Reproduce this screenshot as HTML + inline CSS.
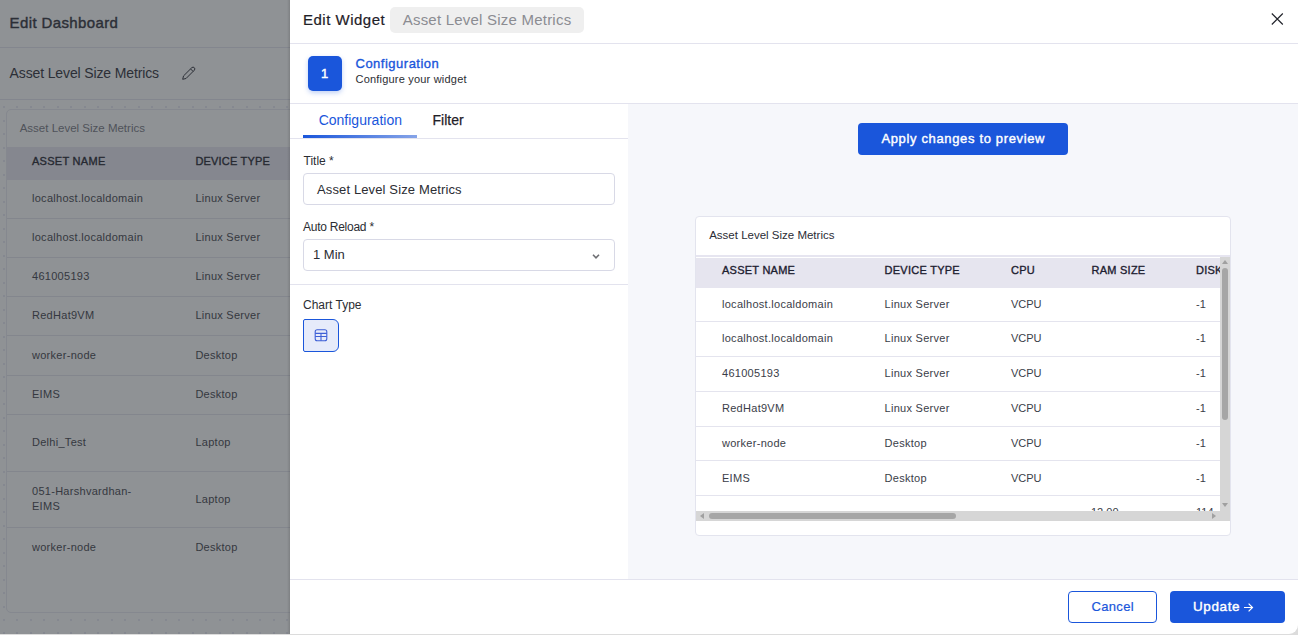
<!DOCTYPE html>
<html><head><meta charset="utf-8">
<style>
*{box-sizing:border-box;margin:0;padding:0}
html,body{width:1298px;height:635px;overflow:hidden;background:#dcdcdc;font-family:"Liberation Sans",sans-serif}
.t{position:absolute;white-space:nowrap;line-height:normal}
.b{position:absolute}
#bg{position:absolute;left:0;top:0;width:290px;height:634px;background:#8f9295;overflow:hidden}
#dr{position:absolute;left:290px;top:0;width:1008px;height:634px;background:#fff;border-bottom-right-radius:9px;overflow:hidden}
#sh{position:absolute;left:287px;top:0;width:3px;height:634px;background:linear-gradient(90deg,rgba(0,0,0,0),rgba(0,0,0,.12))}
</style></head>
<body>
<div id="bg">
<div class="t" style="left:9.6px;top:14.42px;font-size:15px;color:#2c2f37;letter-spacing:0.38px;-webkit-text-stroke:0.4px #2c2f37;">Edit Dashboard</div>
<div class="b" style="left:0;top:47px;width:290px;height:1px;background:#83868e"></div>
<div class="t" style="left:9.6px;top:65.33px;font-size:14px;color:#2c2f37;letter-spacing:-0.13px;">Asset Level Size Metrics</div>
<svg class="b" style="left:175px;top:60px" width="30" height="25" viewBox="0 0 30 25"><path d="M7.7 19.3 L8.53 15.93 L16.83 7.63 A1.8 1.8 0 0 1 19.37 10.17 L11.07 18.47 Z M15.56 8.9 L18.1 11.44" fill="none" stroke="#2c2f37" stroke-width="1" stroke-linejoin="round"/></svg>
<div class="b" style="left:0;top:99px;width:290px;height:1px;background:#83868e"></div>
<div class="b" style="left:2.5px;top:106px;width:2px;height:2px;background:#858890"></div>
<div class="b" style="left:2.5px;top:619px;width:2px;height:2px;background:#858890"></div>
<div class="b" style="left:2.5px;top:632px;width:2px;height:2px;background:#858890"></div>
<div class="b" style="left:16.0px;top:106px;width:2px;height:2px;background:#858890"></div>
<div class="b" style="left:16.0px;top:619px;width:2px;height:2px;background:#858890"></div>
<div class="b" style="left:16.0px;top:632px;width:2px;height:2px;background:#858890"></div>
<div class="b" style="left:29.5px;top:106px;width:2px;height:2px;background:#858890"></div>
<div class="b" style="left:29.5px;top:619px;width:2px;height:2px;background:#858890"></div>
<div class="b" style="left:29.5px;top:632px;width:2px;height:2px;background:#858890"></div>
<div class="b" style="left:43.0px;top:106px;width:2px;height:2px;background:#858890"></div>
<div class="b" style="left:43.0px;top:619px;width:2px;height:2px;background:#858890"></div>
<div class="b" style="left:43.0px;top:632px;width:2px;height:2px;background:#858890"></div>
<div class="b" style="left:56.5px;top:106px;width:2px;height:2px;background:#858890"></div>
<div class="b" style="left:56.5px;top:619px;width:2px;height:2px;background:#858890"></div>
<div class="b" style="left:56.5px;top:632px;width:2px;height:2px;background:#858890"></div>
<div class="b" style="left:70.0px;top:106px;width:2px;height:2px;background:#858890"></div>
<div class="b" style="left:70.0px;top:619px;width:2px;height:2px;background:#858890"></div>
<div class="b" style="left:70.0px;top:632px;width:2px;height:2px;background:#858890"></div>
<div class="b" style="left:83.5px;top:106px;width:2px;height:2px;background:#858890"></div>
<div class="b" style="left:83.5px;top:619px;width:2px;height:2px;background:#858890"></div>
<div class="b" style="left:83.5px;top:632px;width:2px;height:2px;background:#858890"></div>
<div class="b" style="left:97.0px;top:106px;width:2px;height:2px;background:#858890"></div>
<div class="b" style="left:97.0px;top:619px;width:2px;height:2px;background:#858890"></div>
<div class="b" style="left:97.0px;top:632px;width:2px;height:2px;background:#858890"></div>
<div class="b" style="left:110.5px;top:106px;width:2px;height:2px;background:#858890"></div>
<div class="b" style="left:110.5px;top:619px;width:2px;height:2px;background:#858890"></div>
<div class="b" style="left:110.5px;top:632px;width:2px;height:2px;background:#858890"></div>
<div class="b" style="left:124.0px;top:106px;width:2px;height:2px;background:#858890"></div>
<div class="b" style="left:124.0px;top:619px;width:2px;height:2px;background:#858890"></div>
<div class="b" style="left:124.0px;top:632px;width:2px;height:2px;background:#858890"></div>
<div class="b" style="left:137.5px;top:106px;width:2px;height:2px;background:#858890"></div>
<div class="b" style="left:137.5px;top:619px;width:2px;height:2px;background:#858890"></div>
<div class="b" style="left:137.5px;top:632px;width:2px;height:2px;background:#858890"></div>
<div class="b" style="left:151.0px;top:106px;width:2px;height:2px;background:#858890"></div>
<div class="b" style="left:151.0px;top:619px;width:2px;height:2px;background:#858890"></div>
<div class="b" style="left:151.0px;top:632px;width:2px;height:2px;background:#858890"></div>
<div class="b" style="left:164.5px;top:106px;width:2px;height:2px;background:#858890"></div>
<div class="b" style="left:164.5px;top:619px;width:2px;height:2px;background:#858890"></div>
<div class="b" style="left:164.5px;top:632px;width:2px;height:2px;background:#858890"></div>
<div class="b" style="left:178.0px;top:106px;width:2px;height:2px;background:#858890"></div>
<div class="b" style="left:178.0px;top:619px;width:2px;height:2px;background:#858890"></div>
<div class="b" style="left:178.0px;top:632px;width:2px;height:2px;background:#858890"></div>
<div class="b" style="left:191.5px;top:106px;width:2px;height:2px;background:#858890"></div>
<div class="b" style="left:191.5px;top:619px;width:2px;height:2px;background:#858890"></div>
<div class="b" style="left:191.5px;top:632px;width:2px;height:2px;background:#858890"></div>
<div class="b" style="left:205.0px;top:106px;width:2px;height:2px;background:#858890"></div>
<div class="b" style="left:205.0px;top:619px;width:2px;height:2px;background:#858890"></div>
<div class="b" style="left:205.0px;top:632px;width:2px;height:2px;background:#858890"></div>
<div class="b" style="left:218.5px;top:106px;width:2px;height:2px;background:#858890"></div>
<div class="b" style="left:218.5px;top:619px;width:2px;height:2px;background:#858890"></div>
<div class="b" style="left:218.5px;top:632px;width:2px;height:2px;background:#858890"></div>
<div class="b" style="left:232.0px;top:106px;width:2px;height:2px;background:#858890"></div>
<div class="b" style="left:232.0px;top:619px;width:2px;height:2px;background:#858890"></div>
<div class="b" style="left:232.0px;top:632px;width:2px;height:2px;background:#858890"></div>
<div class="b" style="left:245.5px;top:106px;width:2px;height:2px;background:#858890"></div>
<div class="b" style="left:245.5px;top:619px;width:2px;height:2px;background:#858890"></div>
<div class="b" style="left:245.5px;top:632px;width:2px;height:2px;background:#858890"></div>
<div class="b" style="left:259.0px;top:106px;width:2px;height:2px;background:#858890"></div>
<div class="b" style="left:259.0px;top:619px;width:2px;height:2px;background:#858890"></div>
<div class="b" style="left:259.0px;top:632px;width:2px;height:2px;background:#858890"></div>
<div class="b" style="left:272.5px;top:106px;width:2px;height:2px;background:#858890"></div>
<div class="b" style="left:272.5px;top:619px;width:2px;height:2px;background:#858890"></div>
<div class="b" style="left:272.5px;top:632px;width:2px;height:2px;background:#858890"></div>
<div class="b" style="left:286.0px;top:106px;width:2px;height:2px;background:#858890"></div>
<div class="b" style="left:286.0px;top:619px;width:2px;height:2px;background:#858890"></div>
<div class="b" style="left:286.0px;top:632px;width:2px;height:2px;background:#858890"></div>
<div class="b" style="left:2.5px;top:119.5px;width:2px;height:2px;background:#858890"></div>
<div class="b" style="left:2.5px;top:133.0px;width:2px;height:2px;background:#858890"></div>
<div class="b" style="left:2.5px;top:146.5px;width:2px;height:2px;background:#858890"></div>
<div class="b" style="left:2.5px;top:160.0px;width:2px;height:2px;background:#858890"></div>
<div class="b" style="left:2.5px;top:173.5px;width:2px;height:2px;background:#858890"></div>
<div class="b" style="left:2.5px;top:187.0px;width:2px;height:2px;background:#858890"></div>
<div class="b" style="left:2.5px;top:200.5px;width:2px;height:2px;background:#858890"></div>
<div class="b" style="left:2.5px;top:214.0px;width:2px;height:2px;background:#858890"></div>
<div class="b" style="left:2.5px;top:227.5px;width:2px;height:2px;background:#858890"></div>
<div class="b" style="left:2.5px;top:241.0px;width:2px;height:2px;background:#858890"></div>
<div class="b" style="left:2.5px;top:254.5px;width:2px;height:2px;background:#858890"></div>
<div class="b" style="left:2.5px;top:268.0px;width:2px;height:2px;background:#858890"></div>
<div class="b" style="left:2.5px;top:281.5px;width:2px;height:2px;background:#858890"></div>
<div class="b" style="left:2.5px;top:295.0px;width:2px;height:2px;background:#858890"></div>
<div class="b" style="left:2.5px;top:308.5px;width:2px;height:2px;background:#858890"></div>
<div class="b" style="left:2.5px;top:322.0px;width:2px;height:2px;background:#858890"></div>
<div class="b" style="left:2.5px;top:335.5px;width:2px;height:2px;background:#858890"></div>
<div class="b" style="left:2.5px;top:349.0px;width:2px;height:2px;background:#858890"></div>
<div class="b" style="left:2.5px;top:362.5px;width:2px;height:2px;background:#858890"></div>
<div class="b" style="left:2.5px;top:376.0px;width:2px;height:2px;background:#858890"></div>
<div class="b" style="left:2.5px;top:389.5px;width:2px;height:2px;background:#858890"></div>
<div class="b" style="left:2.5px;top:403.0px;width:2px;height:2px;background:#858890"></div>
<div class="b" style="left:2.5px;top:416.5px;width:2px;height:2px;background:#858890"></div>
<div class="b" style="left:2.5px;top:430.0px;width:2px;height:2px;background:#858890"></div>
<div class="b" style="left:2.5px;top:443.5px;width:2px;height:2px;background:#858890"></div>
<div class="b" style="left:2.5px;top:457.0px;width:2px;height:2px;background:#858890"></div>
<div class="b" style="left:2.5px;top:470.5px;width:2px;height:2px;background:#858890"></div>
<div class="b" style="left:2.5px;top:484.0px;width:2px;height:2px;background:#858890"></div>
<div class="b" style="left:2.5px;top:497.5px;width:2px;height:2px;background:#858890"></div>
<div class="b" style="left:2.5px;top:511.0px;width:2px;height:2px;background:#858890"></div>
<div class="b" style="left:2.5px;top:524.5px;width:2px;height:2px;background:#858890"></div>
<div class="b" style="left:2.5px;top:538.0px;width:2px;height:2px;background:#858890"></div>
<div class="b" style="left:2.5px;top:551.5px;width:2px;height:2px;background:#858890"></div>
<div class="b" style="left:2.5px;top:565.0px;width:2px;height:2px;background:#858890"></div>
<div class="b" style="left:2.5px;top:578.5px;width:2px;height:2px;background:#858890"></div>
<div class="b" style="left:2.5px;top:592.0px;width:2px;height:2px;background:#858890"></div>
<div class="b" style="left:2.5px;top:605.5px;width:2px;height:2px;background:#858890"></div>
<div class="b" style="left:5.5px;top:109px;width:300px;height:503.5px;border:1px solid #85888f;border-radius:5px;background:#8f9295"></div>
<div class="t" style="left:19.7px;top:121.59px;font-size:11.5px;color:#50535a;">Asset Level Size Metrics</div>
<div class="b" style="left:6.5px;top:147px;width:290px;height:33px;background:#85878f"></div>
<div class="t" style="left:32px;top:154.84px;font-size:11px;color:#262931;letter-spacing:0.28px;-webkit-text-stroke:0.35px #262931;">ASSET NAME</div>
<div class="t" style="left:195.4px;top:154.84px;font-size:11px;color:#262931;letter-spacing:0.2px;-webkit-text-stroke:0.35px #262931;">DEVICE TYPE</div>
<div class="b" style="left:6.5px;top:217.7px;width:290px;height:1px;background:#83868d"></div>
<div class="b" style="left:6.5px;top:257.0px;width:290px;height:1px;background:#83868d"></div>
<div class="b" style="left:6.5px;top:295.8px;width:290px;height:1px;background:#83868d"></div>
<div class="b" style="left:6.5px;top:335.1px;width:290px;height:1px;background:#83868d"></div>
<div class="b" style="left:6.5px;top:374.5px;width:290px;height:1px;background:#83868d"></div>
<div class="b" style="left:6.5px;top:413.8px;width:290px;height:1px;background:#83868d"></div>
<div class="b" style="left:6.5px;top:470.8px;width:290px;height:1px;background:#83868d"></div>
<div class="b" style="left:6.5px;top:527.1px;width:290px;height:1px;background:#83868d"></div>
<div class="t" style="left:32px;top:191.84px;font-size:11px;color:#353840;letter-spacing:0.28px;">localhost.localdomain</div>
<div class="t" style="left:195.4px;top:191.84px;font-size:11px;color:#353840;letter-spacing:0.27px;">Linux Server</div>
<div class="t" style="left:32px;top:231.04px;font-size:11px;color:#353840;letter-spacing:0.28px;">localhost.localdomain</div>
<div class="t" style="left:195.4px;top:231.04px;font-size:11px;color:#353840;letter-spacing:0.27px;">Linux Server</div>
<div class="t" style="left:32px;top:270.05px;font-size:11px;color:#353840;letter-spacing:0.28px;">461005193</div>
<div class="t" style="left:195.4px;top:270.05px;font-size:11px;color:#353840;letter-spacing:0.27px;">Linux Server</div>
<div class="t" style="left:32px;top:309.05px;font-size:11px;color:#353840;letter-spacing:0.28px;">RedHat9VM</div>
<div class="t" style="left:195.4px;top:309.05px;font-size:11px;color:#353840;letter-spacing:0.27px;">Linux Server</div>
<div class="t" style="left:32px;top:348.94px;font-size:11px;color:#353840;letter-spacing:0.28px;">worker-node</div>
<div class="t" style="left:195.4px;top:348.94px;font-size:11px;color:#353840;letter-spacing:0.27px;">Desktop</div>
<div class="t" style="left:32px;top:388.05px;font-size:11px;color:#353840;letter-spacing:0.28px;">EIMS</div>
<div class="t" style="left:195.4px;top:388.05px;font-size:11px;color:#353840;letter-spacing:0.27px;">Desktop</div>
<div class="t" style="left:32px;top:436.15px;font-size:11px;color:#353840;letter-spacing:0.28px;">Delhi_Test</div>
<div class="t" style="left:195.4px;top:436.15px;font-size:11px;color:#353840;letter-spacing:0.27px;">Laptop</div>
<div class="t" style="left:32px;top:485.05px;font-size:11px;color:#353840;letter-spacing:0.28px;">051-Harshvardhan-</div>
<div class="t" style="left:195.4px;top:492.85px;font-size:11px;color:#353840;letter-spacing:0.27px;">Laptop</div>
<div class="t" style="left:32px;top:541.04px;font-size:11px;color:#353840;letter-spacing:0.28px;">worker-node</div>
<div class="t" style="left:195.4px;top:541.04px;font-size:11px;color:#353840;letter-spacing:0.27px;">Desktop</div>
<div class="t" style="left:32px;top:500.05px;font-size:11px;color:#353840;letter-spacing:0.28px;">EIMS</div>
</div>
<div id="sh"></div>
<div id="dr">
<div class="t" style="left:13px;top:11.42px;font-size:15px;color:#1f2128;letter-spacing:0.5px;-webkit-text-stroke:0.2px #1f2128;">Edit Widget</div>
<div class="b" style="left:100px;top:7px;width:194px;height:26px;background:#efefef;border-radius:5px"></div>
<div class="t" style="left:112.7px;top:11.22px;font-size:15px;color:#8b8c92;letter-spacing:0.22px;">Asset Level Size Metrics</div>
<svg class="b" style="left:980px;top:12px" width="14" height="14" viewBox="0 0 14 14"><path d="M1.8 1.5L12.8 12.5M12.8 1.5L1.8 12.5" stroke="#23252c" stroke-width="1.15"/></svg>
<div class="b" style="left:0;top:43px;width:1008px;height:1px;background:#e3e3ee"></div>
<div class="b" style="left:18px;top:56px;width:34px;height:35px;background:#1a56db;border-radius:5px;box-shadow:0 2px 5px rgba(26,86,219,.28)"></div>
<div class="t" style="left:31px;top:66.23px;font-size:13px;color:#fff;-webkit-text-stroke:0.4px #fff;">1</div>
<div class="t" style="left:65.5px;top:56.23px;font-size:13px;color:#1a56db;letter-spacing:0.5px;-webkit-text-stroke:0.35px #1a56db;">Configuration</div>
<div class="t" style="left:65.5px;top:72.55px;font-size:11px;color:#2b2d33;letter-spacing:0.2px;">Configure your widget</div>
<div class="b" style="left:0;top:103px;width:1008px;height:1px;background:#e3e3ee"></div>
<div class="b" style="left:338px;top:104px;width:670px;height:475px;background:#f6f7fb"></div>
<div class="t" style="left:28.7px;top:112.33px;font-size:14px;color:#1a56db;">Configuration</div>
<div class="t" style="left:142.4px;top:112.33px;font-size:14px;color:#1f2128;letter-spacing:0.05px;-webkit-text-stroke:0.25px #1f2128;">Filter</div>
<div class="b" style="left:13px;top:135px;width:114px;height:3px;background:linear-gradient(90deg,#1a56db,#86a4e8)"></div>
<div class="b" style="left:0;top:138px;width:338px;height:1px;background:#e3e3ee"></div>
<div class="t" style="left:13.5px;top:154.14px;font-size:12px;color:#2b2d33;">Title *</div>
<div class="b" style="left:13px;top:173px;width:312px;height:32px;border:1px solid #d8d9e6;border-radius:4px"></div>
<div class="t" style="left:27px;top:182.44px;font-size:13px;color:#2b2d33;letter-spacing:0.13px;">Asset Level Size Metrics</div>
<div class="t" style="left:13px;top:220.14px;font-size:12px;color:#2b2d33;letter-spacing:-0.25px;">Auto Reload *</div>
<div class="b" style="left:13px;top:239px;width:312px;height:32px;border:1px solid #d8d9e6;border-radius:4px"></div>
<div class="t" style="left:23px;top:247.04px;font-size:13px;color:#2b2d33;">1 Min</div>
<svg class="b" style="left:301.5px;top:253px" width="8" height="7" viewBox="0 0 8 7"><path d="M1 1.8 L4 4.8 L7 1.8" fill="none" stroke="#6e6f73" stroke-width="1.6"/></svg>
<div class="b" style="left:0;top:283.5px;width:338px;height:1px;background:#e3e3ee"></div>
<div class="t" style="left:13px;top:298.14px;font-size:12px;color:#2b2d33;">Chart Type</div>
<div class="b" style="left:13px;top:319px;width:36px;height:33px;border:1.5px solid #1a56db;border-radius:2px 6px 6px 2px;background:#e6ebfa"></div>
<svg class="b" style="left:24px;top:329px" width="14" height="13" viewBox="0 0 14 13"><rect x="1.2" y="0.8" width="11.6" height="11" rx="2" fill="none" stroke="#3d5fd6" stroke-width="1.1"/><path d="M1.2 4.4H12.8M1.2 7.5H12.8M7 4.4V11.8" stroke="#3d5fd6" stroke-width="1.1"/></svg>
<div class="b" style="left:568px;top:123px;width:210px;height:32px;background:#1a56db;border-radius:4px"></div>
<div class="t" style="left:591.4px;top:131.24px;font-size:13px;color:#fff;letter-spacing:0.65px;-webkit-text-stroke:0.4px #fff;">Apply changes to preview</div>
<div class="b" style="left:405px;top:216px;width:535.5px;height:319.5px;background:#fff;border:1px solid #e3e4ee;border-radius:4px"></div>
<div class="t" style="left:419.2px;top:228.89px;font-size:11.5px;color:#2b2d36;">Asset Level Size Metrics</div>
<div class="b" style="left:406px;top:255px;width:534px;height:2px;background:#e6e5f0"></div>
<div class="b" style="left:406px;top:257.5px;width:524px;height:253.5px;overflow:hidden">
<div class="b" style="left:0;top:0.5px;width:600px;height:30px;background:#e6e5ef"></div>
<div class="t" style="left:26.00px;top:6.54px;font-size:11px;color:#1d2030;letter-spacing:0.25px;-webkit-text-stroke:0.35px #1d2030;">ASSET NAME</div>
<div class="t" style="left:188.60px;top:6.54px;font-size:11px;color:#1d2030;letter-spacing:0.25px;-webkit-text-stroke:0.35px #1d2030;">DEVICE TYPE</div>
<div class="t" style="left:315.00px;top:6.54px;font-size:11px;color:#1d2030;letter-spacing:0.25px;-webkit-text-stroke:0.35px #1d2030;">CPU</div>
<div class="t" style="left:395.50px;top:6.54px;font-size:11px;color:#1d2030;letter-spacing:0.25px;-webkit-text-stroke:0.35px #1d2030;">RAM SIZE</div>
<div class="t" style="left:500.00px;top:6.54px;font-size:11px;color:#1d2030;letter-spacing:0.25px;-webkit-text-stroke:0.35px #1d2030;">DISK SPACE</div>
<div class="b" style="left:0;top:63.30px;width:600px;height:1px;background:#e4e4ee"></div>
<div class="b" style="left:0;top:98.60px;width:600px;height:1px;background:#e4e4ee"></div>
<div class="b" style="left:0;top:133.60px;width:600px;height:1px;background:#e4e4ee"></div>
<div class="b" style="left:0;top:168.60px;width:600px;height:1px;background:#e4e4ee"></div>
<div class="b" style="left:0;top:202.80px;width:600px;height:1px;background:#e4e4ee"></div>
<div class="b" style="left:0;top:237.50px;width:600px;height:1px;background:#e4e4ee"></div>
<div class="t" style="left:26.00px;top:40.35px;font-size:11px;color:#3a3d48;letter-spacing:0.28px;">localhost.localdomain</div>
<div class="t" style="left:188.60px;top:40.35px;font-size:11px;color:#3a3d48;letter-spacing:0.27px;">Linux Server</div>
<div class="t" style="left:315.00px;top:40.35px;font-size:11px;color:#3a3d48;">VCPU</div>
<div class="t" style="left:500.00px;top:40.35px;font-size:11px;color:#3a3d48;">-1</div>
<div class="t" style="left:26.00px;top:74.45px;font-size:11px;color:#3a3d48;letter-spacing:0.28px;">localhost.localdomain</div>
<div class="t" style="left:188.60px;top:74.45px;font-size:11px;color:#3a3d48;letter-spacing:0.27px;">Linux Server</div>
<div class="t" style="left:315.00px;top:74.45px;font-size:11px;color:#3a3d48;">VCPU</div>
<div class="t" style="left:500.00px;top:74.45px;font-size:11px;color:#3a3d48;">-1</div>
<div class="t" style="left:26.00px;top:109.75px;font-size:11px;color:#3a3d48;letter-spacing:0.28px;">461005193</div>
<div class="t" style="left:188.60px;top:109.75px;font-size:11px;color:#3a3d48;letter-spacing:0.27px;">Linux Server</div>
<div class="t" style="left:315.00px;top:109.75px;font-size:11px;color:#3a3d48;">VCPU</div>
<div class="t" style="left:500.00px;top:109.75px;font-size:11px;color:#3a3d48;">-1</div>
<div class="t" style="left:26.00px;top:144.75px;font-size:11px;color:#3a3d48;letter-spacing:0.28px;">RedHat9VM</div>
<div class="t" style="left:188.60px;top:144.75px;font-size:11px;color:#3a3d48;letter-spacing:0.27px;">Linux Server</div>
<div class="t" style="left:315.00px;top:144.75px;font-size:11px;color:#3a3d48;">VCPU</div>
<div class="t" style="left:500.00px;top:144.75px;font-size:11px;color:#3a3d48;">-1</div>
<div class="t" style="left:26.00px;top:179.75px;font-size:11px;color:#3a3d48;letter-spacing:0.28px;">worker-node</div>
<div class="t" style="left:188.60px;top:179.75px;font-size:11px;color:#3a3d48;letter-spacing:0.27px;">Desktop</div>
<div class="t" style="left:315.00px;top:179.75px;font-size:11px;color:#3a3d48;">VCPU</div>
<div class="t" style="left:500.00px;top:179.75px;font-size:11px;color:#3a3d48;">-1</div>
<div class="t" style="left:26.00px;top:214.45px;font-size:11px;color:#3a3d48;letter-spacing:0.28px;">EIMS</div>
<div class="t" style="left:188.60px;top:214.45px;font-size:11px;color:#3a3d48;letter-spacing:0.27px;">Desktop</div>
<div class="t" style="left:315.00px;top:214.45px;font-size:11px;color:#3a3d48;">VCPU</div>
<div class="t" style="left:500.00px;top:214.45px;font-size:11px;color:#3a3d48;">-1</div>
<div class="t" style="left:395.00px;top:248.54px;font-size:11px;color:#3a3d48;">12.00</div>
<div class="t" style="left:500.00px;top:248.54px;font-size:11px;color:#3a3d48;">114</div>
</div>
<div class="b" style="left:930px;top:256.5px;width:10px;height:264.5px;background:#d6d6d6"></div>
<div class="b" style="left:406px;top:511px;width:534px;height:10px;background:#d6d6d6"></div>
<div class="b" style="left:932px;top:268px;width:6px;height:152px;background:#a6a6a6;border-radius:3px"></div>
<div class="b" style="left:418.5px;top:513px;width:247px;height:6px;background:#a6a6a6;border-radius:3px"></div>
<svg class="b" style="left:931px;top:259px" width="8" height="6" viewBox="0 0 8 6"><path d="M4 1L7 5H1Z" fill="#a0a0a0"/></svg>
<svg class="b" style="left:931px;top:502px" width="8" height="6" viewBox="0 0 8 6"><path d="M1 1H7L4 5Z" fill="#a0a0a0"/></svg>
<svg class="b" style="left:409px;top:512px" width="6" height="8" viewBox="0 0 6 8"><path d="M5 1V7L1 4Z" fill="#a0a0a0"/></svg>
<svg class="b" style="left:921px;top:512px" width="6" height="8" viewBox="0 0 6 8"><path d="M1 1V7L5 4Z" fill="#a0a0a0"/></svg>
<div class="b" style="left:0;top:579px;width:1008px;height:1px;background:#e3e3ee"></div>
<div class="b" style="left:778px;top:591px;width:89px;height:32px;border:1px solid #1a56db;border-radius:4px"></div>
<div class="t" style="left:801.6px;top:599.44px;font-size:13px;color:#1a56db;letter-spacing:0.3px;-webkit-text-stroke:0.2px #1a56db;">Cancel</div>
<div class="b" style="left:880px;top:591px;width:115px;height:32px;background:#1a56db;border-radius:4px"></div>
<div class="t" style="left:903px;top:598.98px;font-size:13.5px;color:#fff;letter-spacing:0.6px;-webkit-text-stroke:0.4px #fff;">Update</div>
<svg class="b" style="left:953px;top:602px" width="11" height="11" viewBox="0 0 11 11"><path d="M1 5.5H9.5M5.6 1.6L9.5 5.5L5.6 9.4" fill="none" stroke="#fff" stroke-width="1.2"/></svg>
</div>
</body></html>
